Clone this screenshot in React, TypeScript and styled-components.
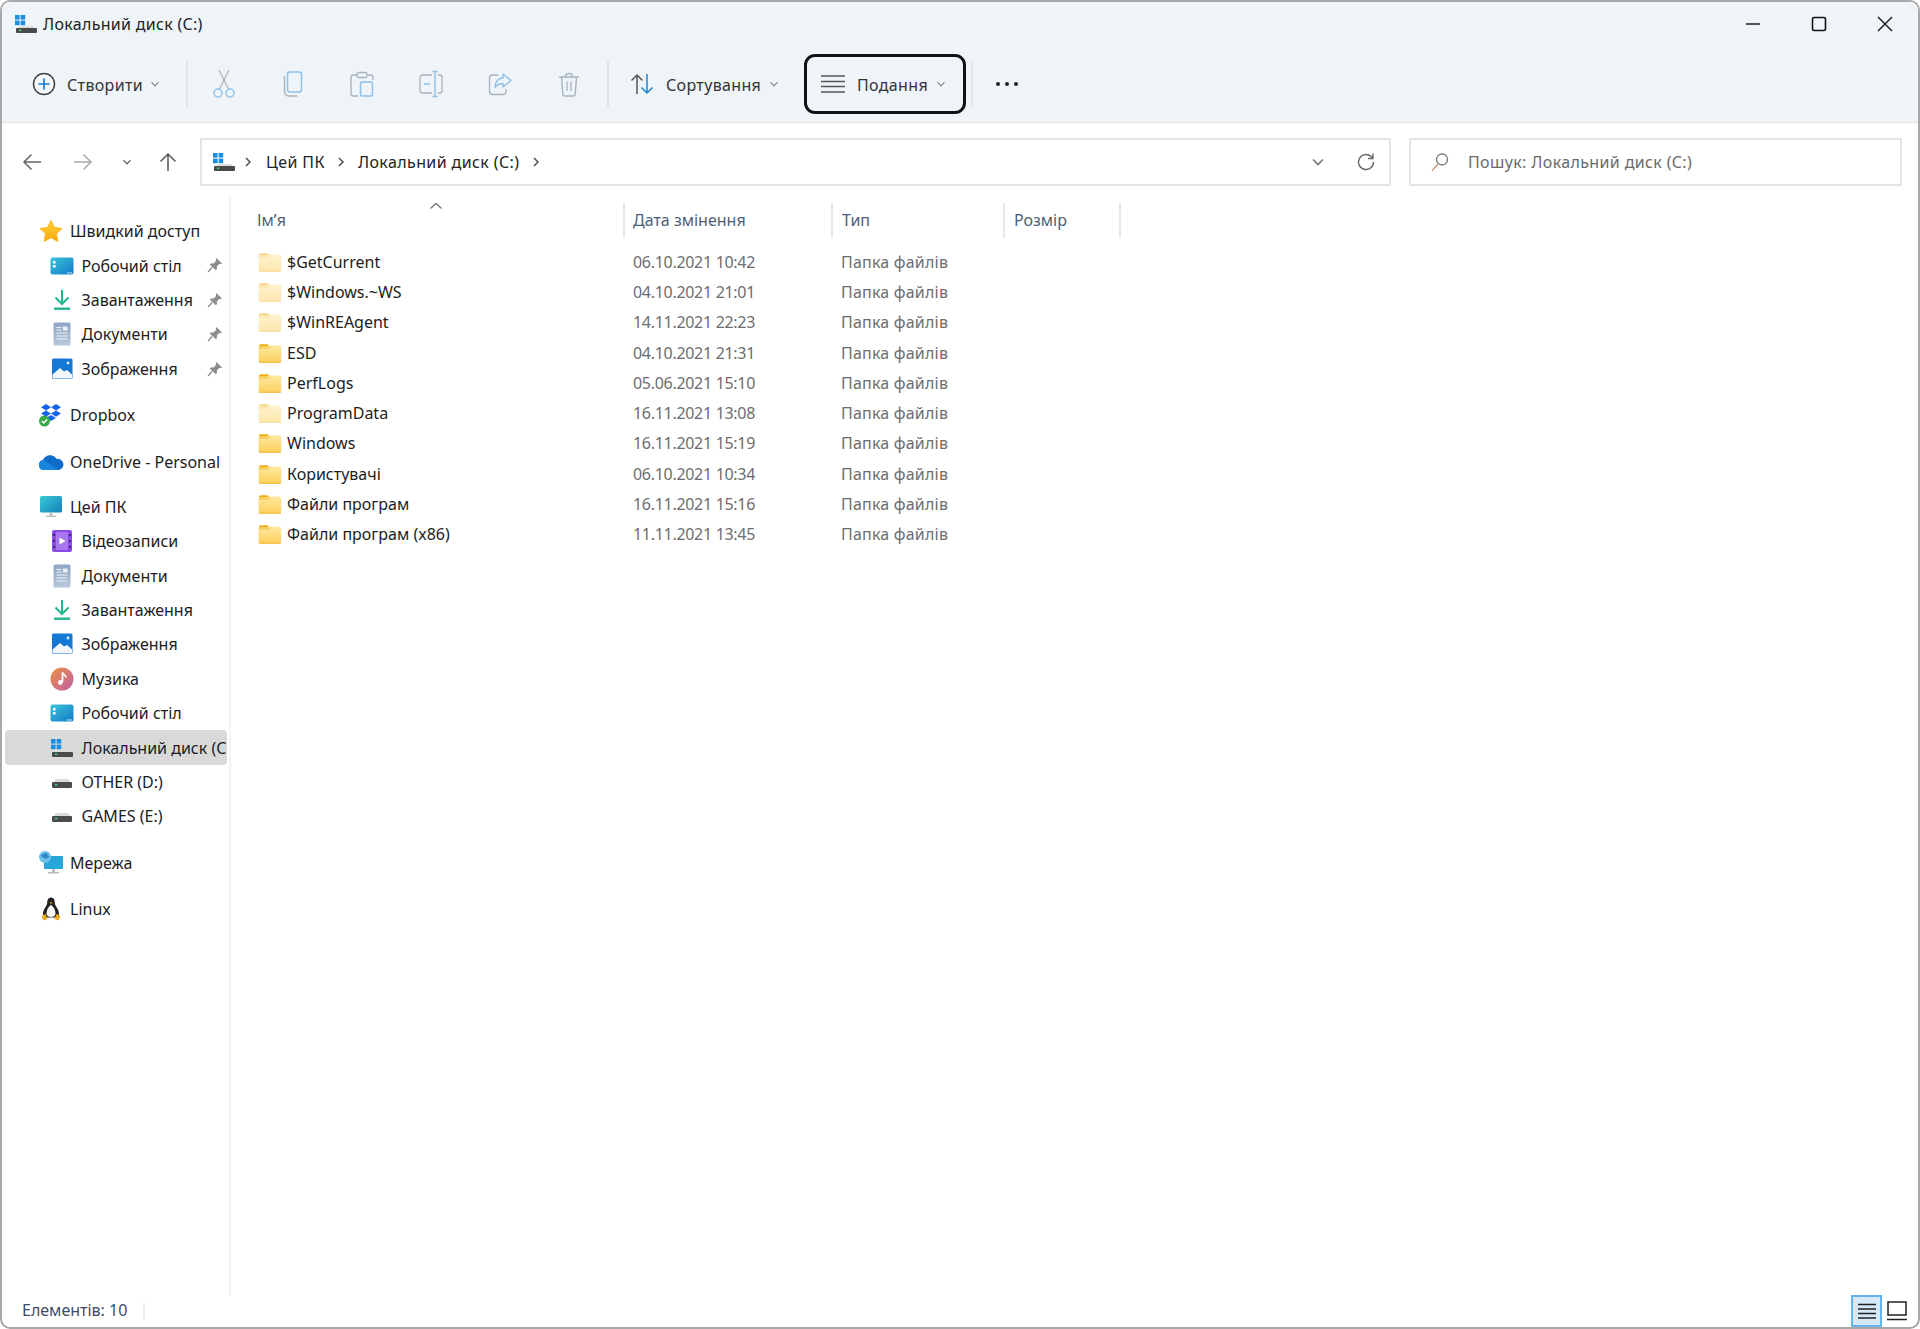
import React from "react";
import styled, { createGlobalStyle } from "styled-components";

const Global = createGlobalStyle`
  html, body { margin: 0; padding: 0; height: 100%; background: #fff; }
  #root { height: 100%; }
  * { box-sizing: border-box; }
  body { font-family: "Noto Sans", "Open Sans", sans-serif; font-size: 16px; color: #1c1c1c; }
  svg { display: block; flex: none; }
`;

const Win = styled.div`
  height: 1329px;
  border: 2px solid #a8a8a8;
  border-radius: 10px;
  display: flex;
  flex-direction: column;
  overflow: hidden;
  background: #fff;
`;
const Head = styled.header`
  background: #eff4f9;
  border-bottom: 1px solid #e2e4e6;
  height: 121px;
  flex: none;
  display: flex;
  flex-direction: column;
`;
const TitleBar = styled.div`
  height: 42px;
  flex: none;
  display: flex;
  align-items: center;
  padding: 1px 0 0 12px;
`;
const TitleText = styled.span`
  flex: 1;
  margin-left: 5px;
  letter-spacing: 0.3px;
  color: #222;
`;
const WinControl = styled.div`
  width: 66px;
  height: 42px;
  display: flex;
  align-items: center;
  justify-content: center;
`;
const Toolbar = styled.div`
  height: 78px;
  flex: none;
  display: flex;
  align-items: center;
  padding: 2px 0 0 26px;
`;
const ToolButton = styled.div<{ $w: number; $focus?: boolean; $pad: number; $gap: number }>`
  width: ${(p) => p.$w}px;
  flex: none;
  height: 60px;
  display: flex;
  align-items: center;
  gap: ${(p) => p.$gap}px;
  padding-left: ${(p) => p.$pad}px;
  border-radius: 11px;
  color: #333;
  border: 3px solid ${(p) => (p.$focus ? "#111" : "transparent")};
`;
const Label = styled.span<{ $w: number }>`
  width: ${(p) => p.$w}px;
  padding-top: 2px;
  letter-spacing: 0.35px;
  white-space: nowrap;
`;
const IconButton = styled.div`
  width: 69px;
  flex: none;
  height: 48px;
  display: flex;
  align-items: center;
  justify-content: center;
`;
const ToolSep = styled.div<{ $ml: number; $mr?: number }>`
  width: 2px;
  flex: none;
  height: 46px;
  margin-left: ${(p) => p.$ml}px;
  margin-right: ${(p) => p.$mr ?? 0}px;
  background: #e1e5e9;
`;
const MoreDots = styled.div`
  margin-left: 22px;
`;
const AddressRow = styled.div`
  height: 73px;
  flex: none;
  display: grid;
  grid-template-columns: 198px 1191px 1fr;
  padding-top: 15px;
`;
const NavGroup = styled.div`
  height: 48px;
  display: flex;
  align-items: center;
`;
const NavBtn = styled.div<{ $w: number }>`
  width: ${(p) => p.$w}px;
  display: flex;
  justify-content: center;
`;
const AddrBox = styled.div`
  height: 48px;
  border: 2px solid #e4e4e4;
  display: flex;
  align-items: center;
  padding-left: 10px;
  letter-spacing: 0.4px;
  color: #222;
`;
const CrumbSep = styled.div<{ $l: number; $r: number }>`
  margin: 0 ${(p) => p.$r}px 0 ${(p) => p.$l}px;
`;
const AddrRight = styled.div`
  margin-left: auto;
  display: flex;
  align-items: center;
  gap: 31px;
  padding-right: 13px;
`;
const SearchBox = styled.div`
  height: 48px;
  width: 493px;
  margin-left: 18px;
  border: 2px solid #e4e4e4;
  display: flex;
  align-items: center;
  padding-left: 20px;
  gap: 19px;
  letter-spacing: 0.37px;
  color: #6a6a6a;
`;
const Content = styled.div`
  flex: 1;
  min-height: 0;
  display: flex;
`;
const Sidebar = styled.nav`
  width: 229px;
  flex: none;
  padding: 18px 2px 0 3px;
  border-right: 2px solid #f3f3f3;
`;
const NavRow = styled.div<{ $sub?: boolean; $sel?: boolean; $top?: number }>`
  height: 34.4px;
  margin-top: ${(p) => p.$top ?? 0}px;
  display: flex;
  align-items: center;
  gap: ${(p) => (p.$sub ? 7.5 : 7)}px;
  padding-left: ${(p) => (p.$sub ? 45 : 34)}px;
  background: ${(p) => (p.$sel ? "#d9d9d9" : "transparent")};
  border-radius: 4px;
  overflow: hidden;
  position: relative;
  white-space: nowrap;
  color: #1c1c24;
`;
const IconSlot = styled.span`
  width: 24px;
  flex: none;
  display: flex;
  justify-content: center;
`;
const PinBox = styled.span`
  position: absolute;
  left: 202px;
  top: 9px;
`;
const Main = styled.main`
  flex: 1;
  min-width: 0;
  padding: 7px 0 0 20px;
  position: relative;
`;
const HeaderRow = styled.div`
  display: grid;
  grid-template-columns: 374px 208px 172px 116px;
  height: 35px;
`;
const HeadCell = styled.div<{ $pad: number }>`
  padding: 0 0 1px ${(p) => p.$pad}px;
  display: flex;
  align-items: center;
  color: #4d5f78;
  border-right: 2px solid #e8e8e8;
`;
const SortCaret = styled.div`
  position: absolute;
  left: 198px;
  top: 6px;
`;
const FileList = styled.div`
  margin-top: 8.5px;
`;
const FileRow = styled.div`
  display: grid;
  grid-template-columns: 374px 208px 172px;
  height: 30.3px;
  align-items: center;
`;
const NameCell = styled.div`
  display: flex;
  align-items: center;
  gap: 5px;
  padding-left: 7px;
  color: #1d1d1d;
`;
const MetaCell = styled.div<{ $pad: number; $ls?: number }>`
  padding-left: ${(p) => p.$pad}px;
  letter-spacing: ${(p) => p.$ls ?? 0}px;
  color: #6d6d6d;
`;
const StatusBar = styled.footer`
  height: 32px;
  flex: none;
  display: flex;
  align-items: center;
  padding: 0 0 0 20px;
  color: #3f4b66;
`;
const StatusText = styled.span`
  width: 121px;
  padding-bottom: 2px;
`;
const StatusSep = styled.div`
  width: 2px;
  height: 18px;
  background: #f0f0f0;
`;
const ViewToggles = styled.div`
  margin-left: auto;
  display: flex;
  align-items: center;
  height: 100%;
  padding-right: 11px;
  gap: 5px;
`;
const ViewBtn = styled.div<{ $on?: boolean }>`
  width: 31px;
  height: 32px;
  display: flex;
  align-items: center;
  justify-content: center;
  background: ${(p) => (p.$on ? "#d5e9f8" : "transparent")};
  border: 2px solid ${(p) => (p.$on ? "#62b5e5" : "transparent")};
`;

const Chev = ({ c = "#888", s = 10 }: { c?: string; s?: number }) => (
  <svg width={s} height={s} viewBox="0 0 10 10"><path d="M1.5 3.2 5 6.8l3.5-3.6" fill="none" stroke={c} strokeWidth="1.2" /></svg>
);
const Crumb = () => (
  <svg width="8" height="12" viewBox="0 0 8 12"><path d="M2 2l4 4-4 4" fill="none" stroke="#444" strokeWidth="1.4" /></svg>
);
const DriveCIcon = () => (
  <svg width="24" height="20" viewBox="0 0 24 20">
    <rect x="1" y="1" width="4.600" height="4.600" fill="#1a8fdf" /><rect x="6.600" y="1" width="4.600" height="4.600" fill="#1a8fdf" />
    <rect x="1" y="6.600" width="4.600" height="4.600" fill="#1a8fdf" /><rect x="6.600" y="6.600" width="4.600" height="4.600" fill="#1a8fdf" />
    <path d="M3 16l3-4h13l3 4z" fill="#dcdcdc" />
    <rect x="2" y="14" width="21" height="5" rx="1" fill="#4a4a4a" />
    <rect x="5" y="15.500" width="2.400" height="1.600" fill="#3ed06a" />
  </svg>
);
const DriveIcon = () => (
  <svg width="24" height="20" viewBox="0 0 24 20">
    <path d="M3 11l3-4h12l3 4z" fill="#dcdcdc" />
    <rect x="2" y="10" width="20" height="6" rx="1" fill="#4c4c4c" />
    <rect x="5" y="11.800" width="2.400" height="1.600" fill="#3ed06a" />
  </svg>
);
const Star = () => (
  <svg width="24" height="22" viewBox="0 0 24 22"><defs><linearGradient id="st" x1="0" y1="0" x2="0" y2="1"><stop offset="0" stopColor="#ffd43c" /><stop offset="1" stopColor="#f9a80e" /></linearGradient></defs>
    <path d="M12 .5l3.400 7 7.600 1-5.600 5.300 1.500 7.600L12 17.700 5.100 21.400l1.500-7.600L1 8.500l7.600-1z" fill="url(#st)" stroke="#f7b21a" strokeLinejoin="round" /></svg>
);
const Desktop = () => (
  <svg width="24" height="20" viewBox="0 0 24 20"><defs><linearGradient id="dk" x1="0" y1="0" x2="1" y2="1"><stop offset="0" stopColor="#37c6d8" /><stop offset="1" stopColor="#1578c8" /></linearGradient></defs>
    <rect x="0.500" y="1.500" width="23" height="17" rx="2" fill="url(#dk)" /><rect x="3" y="5" width="2.500" height="2.500" fill="#fff" /><rect x="3" y="9" width="2.500" height="2.500" fill="#fff" /><rect x="17" y="16.500" width="5" height="1" fill="#cfeaf5" /></svg>
);
const Download = () => (
  <svg width="24" height="22" viewBox="0 0 24 22"><path d="M12 1v13.500M5.500 8.500l6.500 6.500 6.500-6.500" fill="none" stroke="#22b590" strokeWidth="2" /><rect x="4" y="18.500" width="16" height="2.400" fill="#22b590" /></svg>
);
const Docs = () => (
  <svg width="24" height="24" viewBox="0 0 24 24"><defs><linearGradient id="dc" x1="0" y1="0" x2="0" y2="1"><stop offset="0" stopColor="#8ea5c6" /><stop offset="1" stopColor="#b8c7db" /></linearGradient></defs>
    <rect x="3.500" y="0.500" width="17" height="23" rx="1.500" fill="url(#dc)" /><path d="M6.500 5.500h5M6.500 8h5M6.500 11h11M6.500 14h11M6.500 17h11" stroke="#eef2f7" strokeWidth="1.200" /><rect x="13" y="4.500" width="4.500" height="4" fill="#eef2f7" /></svg>
);
const Pictures = () => (
  <svg width="24" height="24" viewBox="0 0 24 24"><rect x="2" y="1.500" width="20.500" height="20.500" rx="1.500" fill="#1478d4" /><circle cx="18" cy="6" r="1.400" fill="#dfefff" /><path d="M2.500 21.500v-4L10 11l4 3.500 3-1.500 5 4.500v4z" fill="#f2f6fb" /></svg>
);
const Dropbox = () => (
  <svg width="26" height="24" viewBox="0 0 26 24"><path d="M8 1l5 3.200L8 7.400 3 4.200zM18 1l5 3.200-5 3.200-5-3.200zM8 7.400l5 3.200-5 3.200-5-3.200zM18 7.400l5 3.200-5 3.200-5-3.200zM13 12l5 3-5 3-5-3z" fill="#1464f0" /><circle cx="6.500" cy="18" r="5.500" fill="#38a84a" /><path d="M3.800 18l2 2 3.400-3.600" fill="none" stroke="#fff" strokeWidth="1.500" /></svg>
);
const OneDrive = () => (
  <svg width="26" height="18" viewBox="0 0 26 18"><path d="M6 17a5 5 0 0 1-1-9.900A7.500 7.500 0 0 1 18.500 6 5.600 5.600 0 0 1 21 17z" fill="#0f6cc9" /><path d="M5.500 17a5 5 0 0 1-.3-9.900l9 5.400L21 17z" fill="#1a85de" /></svg>
);
const Pc = () => (
  <svg width="24" height="24" viewBox="0 0 24 24"><defs><linearGradient id="pc" x1="0" y1="0" x2="1" y2="1"><stop offset="0" stopColor="#38cbd2" /><stop offset="1" stopColor="#1580bd" /></linearGradient></defs>
    <rect x="1" y="1" width="22" height="16.500" rx="1.500" fill="url(#pc)" /><rect x="10.500" y="17.500" width="3" height="3" fill="#b8bcc0" /><rect x="7" y="20.500" width="10" height="1.500" rx=".7" fill="#b8bcc0" /></svg>
);
const Videos = () => (
  <svg width="22" height="24" viewBox="0 0 22 24"><rect x="1" y="1" width="20" height="22" rx="2" fill="#8a49e6" /><rect x="5" y="3" width="12" height="18" fill="#a877f0" /><path d="M8.500 8.500v7l6-3.500z" fill="#fff" /><path d="M2 5h2v2H2zM2 11h2v2H2zM2 17h2v2H2zM18 5h2v2h-2zM18 11h2v2h-2zM18 17h2v2h-2z" fill="#3d2a78" /></svg>
);
const Music = () => (
  <svg width="24" height="24" viewBox="0 0 24 24"><defs><linearGradient id="mu" x1="0" y1="0" x2="1" y2="1"><stop offset="0" stopColor="#ef9040" /><stop offset="1" stopColor="#bf60a8" /></linearGradient></defs>
    <circle cx="12" cy="12" r="11.500" fill="url(#mu)" /><path d="M12.500 5.500v9.500" stroke="#fff" strokeWidth="1.800" /><path d="M12.500 5.500c.5 2 3.500 2.500 3.500 5" fill="none" stroke="#fff" strokeWidth="1.500" /><circle cx="10.300" cy="15.500" r="2.400" fill="#fff" /></svg>
);
const Network = () => (
  <svg width="26" height="24" viewBox="0 0 26 24"><rect x="6" y="5" width="19" height="13" rx="1" fill="#27a6d9" /><rect x="14" y="18" width="3" height="3" fill="#b8bcc0" /><rect x="10" y="21" width="11" height="1.500" fill="#b8bcc0" /><circle cx="7" cy="6" r="6" fill="#6cc0e8" /><path d="M3 4c2 0 3-2 5-2s1 3 3 3-3 4-5 2-3-1-3-3z" fill="#2f86c6" /></svg>
);
const Penguin = () => (
  <svg width="22" height="24" viewBox="0 0 22 24"><path d="M11 .5c3 0 3.800 3 3.800 5.500 0 3 4.200 6 4.200 11 0 2-1.500 3.500-3 3.500H6c-1.500 0-3-1.500-3-3.500 0-5 4.200-8 4.200-11C7.200 3.500 8 .5 11 .5z" fill="#222" /><path d="M11 8c2 1 4.500 5 4.500 8.500 0 2.500-2 3.500-4.500 3.500s-4.500-1-4.500-3.500C6.500 13 9 9 11 8z" fill="#f7f7f7" /><path d="M9.500 5.200h3L11 7z" fill="#e8a820" /><path d="M1.500 19l4-2 2 5-4 1.500zM20.500 19l-4-2-2 5 4 1.500z" fill="#e8a820" /></svg>
);
const Pin = () => (
  <svg width="16" height="16" viewBox="0 0 16 16"><path d="M9.500 1l5.500 5.500-1.500.8-1-.5-2.700 2.700.2 2.500-1.200 1.200L2.700 7.600l1.200-1.200 2.500.2 2.700-2.700-.4-1z" fill="#8d8d8d" /><path d="M5 10.500L1 15" stroke="#8d8d8d" strokeWidth="1.300" /></svg>
);
const Folder = ({ faded }: { faded?: boolean }) => (
  <svg width="24" height="20" viewBox="0 0 24 20" opacity={faded ? 0.5 : 1}>
    <defs><linearGradient id="fo" x1="0" y1="0" x2="0" y2="1"><stop offset="0" stopColor="#ffe9a0" /><stop offset="1" stopColor="#fbcf5c" /></linearGradient></defs>
    <path d="M1 3c0-1 .7-1.800 1.800-1.800h6c.8 0 1.300.3 1.800.9L12.200 4H1z" fill="#f0ae16" />
    <path d="M0.600 5c0-.8.6-1.500 1.500-1.500h7l1.600-1h10.700c1 0 1.800.8 1.800 1.800V18c0 1-.8 1.700-1.800 1.700H2.400c-1 0-1.800-.7-1.800-1.700z" fill="url(#fo)" />
    <path d="M0.600 5h10.100l1.800-1.500" fill="none" stroke="#f3bc3c" strokeWidth="1" />
    <path d="M1 19.200h22" stroke="#f0b93a" strokeWidth="1" />
  </svg>
);

type NavItem = { icon: React.ReactNode; label: string; sub?: boolean; pin?: boolean; sel?: boolean; top?: number };
const navItems: NavItem[] = [
  { icon: <Star />, label: "Швидкий доступ" },
  { icon: <Desktop />, label: "Робочий стіл", sub: true, pin: true },
  { icon: <Download />, label: "Завантаження", sub: true, pin: true },
  { icon: <Docs />, label: "Документи", sub: true, pin: true },
  { icon: <Pictures />, label: "Зображення", sub: true, pin: true },
  { icon: <Dropbox />, label: "Dropbox", top: 12 },
  { icon: <OneDrive />, label: "OneDrive - Personal", top: 12 },
  { icon: <Pc />, label: "Цей ПК", top: 11 },
  { icon: <Videos />, label: "Відеозаписи", sub: true },
  { icon: <Docs />, label: "Документи", sub: true },
  { icon: <Download />, label: "Завантаження", sub: true },
  { icon: <Pictures />, label: "Зображення", sub: true },
  { icon: <Music />, label: "Музика", sub: true },
  { icon: <Desktop />, label: "Робочий стіл", sub: true },
  { icon: <DriveCIcon />, label: "Локальний диск (C:)", sub: true, sel: true },
  { icon: <DriveIcon />, label: "OTHER (D:)", sub: true },
  { icon: <DriveIcon />, label: "GAMES (E:)", sub: true },
  { icon: <Network />, label: "Мережа", top: 12 },
  { icon: <Penguin />, label: "Linux", top: 12 },
];

const files: [string, string, boolean?][] = [
  ["$GetCurrent", "06.10.2021 10:42", true],
  ["$Windows.~WS", "04.10.2021 21:01", true],
  ["$WinREAgent", "14.11.2021 22:23", true],
  ["ESD", "04.10.2021 21:31"],
  ["PerfLogs", "05.06.2021 15:10"],
  ["ProgramData", "16.11.2021 13:08", true],
  ["Windows", "16.11.2021 15:19"],
  ["Користувачі", "06.10.2021 10:34"],
  ["Файли програм", "16.11.2021 15:16"],
  ["Файли програм (x86)", "11.11.2021 13:45"],
];

const disabled = "#a9b3bc";
const accent = "#8fc1e8";

export default function App() {
  return (
    <>
      <Global />
      <Win>
        <Head>
          <TitleBar>
            <DriveCIcon />
            <TitleText>Локальний диск (C:)</TitleText>
            <WinControl><svg width="16" height="16" viewBox="0 0 16 16"><path d="M1 8h14" stroke="#222" strokeWidth="1.600" /></svg></WinControl>
            <WinControl><svg width="16" height="16" viewBox="0 0 16 16"><rect x="1.500" y="1.500" width="13" height="13" rx="1.500" fill="none" stroke="#111" strokeWidth="1.600" /></svg></WinControl>
            <WinControl><svg width="16" height="16" viewBox="0 0 16 16"><path d="M1 1l14 14M15 1L1 15" stroke="#222" strokeWidth="1.500" /></svg></WinControl>
          </TitleBar>
          <Toolbar>
            <ToolButton $w={158} $pad={1} $gap={11}>
              <svg width="24" height="24" viewBox="0 0 24 24"><circle cx="12" cy="12" r="10.500" fill="#fff" fillOpacity=".4" stroke="#444" strokeWidth="1.500" /><path d="M12 6.500v11M6.500 12h11" stroke="#1478c8" strokeWidth="1.700" /></svg>
              <Label $w={72}>Створити</Label>
              <Chev />
            </ToolButton>
            <ToolSep $ml={0} $mr={1.5} />
            <IconButton>
              <svg width="24" height="30" viewBox="0 0 24 30"><path d="M7 1l9.500 19M17 1L7.500 20" stroke={disabled} strokeWidth="1.300" fill="none" /><circle cx="6" cy="24" r="4" fill="none" stroke={accent} strokeWidth="1.500" /><circle cx="18" cy="24" r="4" fill="none" stroke={accent} strokeWidth="1.500" /></svg>
            </IconButton>
            <IconButton>
              <svg width="22" height="26" viewBox="0 0 22 26"><rect x="5.500" y="1" width="14" height="20" rx="2.500" fill="none" stroke={accent} strokeWidth="1.500" /><path d="M2.500 5v16c0 2.200 1.800 4 4 4h9" fill="none" stroke={disabled} strokeWidth="1.400" /></svg>
            </IconButton>
            <IconButton>
              <svg width="24" height="26" viewBox="0 0 24 26"><path d="M7 4H3.500C2 4 1 5 1 6.500v16C1 24 2 25 3.500 25H8" fill="none" stroke={disabled} strokeWidth="1.400" /><path d="M18 4h2.500C22 4 23 5 23 6.500V9" fill="none" stroke={disabled} strokeWidth="1.400" /><rect x="7" y="1.500" width="10" height="5" rx="1.500" fill="none" stroke={disabled} strokeWidth="1.300" /><rect x="10.500" y="11" width="12" height="14" rx="1.500" fill="none" stroke={accent} strokeWidth="1.500" /></svg>
            </IconButton>
            <IconButton>
              <svg width="24" height="28" viewBox="0 0 24 28"><path d="M13 5H3.500C2 5 1 6 1 7.500v13C1 22 2 23 3.500 23H13M19 5h1.500C22 5 23 6 23 7.500v13c0 1.500-1 2.500-2.500 2.500H19" fill="none" stroke={disabled} strokeWidth="1.300" /><path d="M13.500 1.500h5M13.500 26.500h5M16 1.500v25" stroke={accent} strokeWidth="1.400" /><path d="M5 14h6" stroke={accent} strokeWidth="1.500" /></svg>
            </IconButton>
            <IconButton>
              <svg width="24" height="24" viewBox="0 0 24 24"><path d="M10 3H4.500C2.500 3 1.500 4 1.500 6v13.500c0 2 1 3 3 3H15c2 0 3-1 3-3V17" fill="none" stroke={disabled} strokeWidth="1.400" /><path d="M15 2l8 6.500-8 6.500v-3.500c-4 0-6 1-8 4 0-5.500 3-9.500 8-9.500z" fill="none" stroke={accent} strokeWidth="1.400" strokeLinejoin="round" /></svg>
            </IconButton>
            <IconButton>
              <svg width="22" height="26" viewBox="0 0 22 26"><path d="M1 6h20M7.500 5.500c0-4 7-4 7 0M3.500 6l1.300 17c.1 1.200 1 2 2.200 2h8c1.200 0 2.100-.8 2.200-2l1.300-17" fill="none" stroke={disabled} strokeWidth="1.400" /><path d="M9 10.500V20M13 10.500V20" stroke={disabled} strokeWidth="1.300" /></svg>
            </IconButton>
            <ToolSep $ml={3.5} />
            <ToolButton $w={195} $pad={18} $gap={12}>
              <svg width="24" height="24" viewBox="0 0 24 24"><path d="M7 22V3M1.500 8.500L7 3l5.500 5.500" fill="none" stroke="#555" strokeWidth="1.500" /><path d="M17 2v19M11.500 15.500L17 21l5.500-5.500" fill="none" stroke="#1a84d6" strokeWidth="1.500" /></svg>
              <Label $w={91}>Сортування</Label>
              <Chev />
            </ToolButton>
            <ToolButton $w={162} $pad={14} $gap={12} $focus>
              <svg width="24" height="20" viewBox="0 0 24 20"><path d="M0 2h24M0 7.500h24M0 12.500h24M0 18h24" stroke="#555" strokeWidth="1.400" /></svg>
              <Label $w={67}>Подання</Label>
              <Chev />
            </ToolButton>
            <ToolSep $ml={5} />
            <MoreDots>
              <svg width="24" height="6" viewBox="0 0 24 6"><circle cx="3" cy="3" r="2" fill="#222" /><circle cx="12" cy="3" r="2" fill="#222" /><circle cx="21" cy="3" r="2" fill="#222" /></svg>
            </MoreDots>
          </Toolbar>
        </Head>
        <AddressRow>
          <NavGroup>
            <NavBtn $w={60}><svg width="20" height="18" viewBox="0 0 20 18"><path d="M19 9H2M9.500 1.500L2 9l7.500 7.500" fill="none" stroke="#666" strokeWidth="1.500" /></svg></NavBtn>
            <NavBtn $w={42}><svg width="20" height="18" viewBox="0 0 20 18"><path d="M1 9h17M10.500 1.500L18 9l-7.500 7.500" fill="none" stroke="#aaa" strokeWidth="1.500" /></svg></NavBtn>
            <NavBtn $w={46}><Chev c="#555" /></NavBtn>
            <NavBtn $w={36}><svg width="18" height="20" viewBox="0 0 18 20"><path d="M9 19V2M1.500 9.500L9 2l7.500 7.500" fill="none" stroke="#555" strokeWidth="1.500" /></svg></NavBtn>
          </NavGroup>
          <AddrBox>
            <DriveCIcon />
            <CrumbSep $l={8} $r={14}><Crumb /></CrumbSep>
            <span>Цей ПК</span>
            <CrumbSep $l={12} $r={13}><Crumb /></CrumbSep>
            <span>Локальний диск (C:)</span>
            <CrumbSep $l={13} $r={0}><Crumb /></CrumbSep>
            <AddrRight>
              <Chev c="#777" s={14} />
              <svg width="20" height="20" viewBox="0 0 20 20"><path d="M17.500 10a7.500 7.500 0 1 1-2.300-5.400L17 6.500M17 1.500v5h-5" fill="none" stroke="#666" strokeWidth="1.400" /></svg>
            </AddrRight>
          </AddrBox>
          <SearchBox>
            <svg width="18" height="20" viewBox="0 0 18 20"><circle cx="11" cy="7.500" r="5.500" fill="none" stroke="#777" strokeWidth="1.300" /><path d="M7 12L1 18.500" stroke="#c39a86" strokeWidth="1.400" /></svg>
            <span>Пошук: Локальний диск (C:)</span>
          </SearchBox>
        </AddressRow>
        <Content>
          <Sidebar>
            {navItems.map((n, i) => (
              <NavRow key={i} $sub={n.sub} $sel={n.sel} $top={n.top}>
                <IconSlot>{n.icon}</IconSlot>
                <span>{n.label}</span>
                {n.pin && <PinBox><Pin /></PinBox>}
              </NavRow>
            ))}
          </Sidebar>
          <Main>
            <HeaderRow>
              <HeadCell $pad={6}>Ім’я</HeadCell>
              <HeadCell $pad={8}>Дата змінення</HeadCell>
              <HeadCell $pad={9}>Тип</HeadCell>
              <HeadCell $pad={9}>Розмір</HeadCell>
            </HeaderRow>
            <SortCaret><svg width="14" height="8" viewBox="0 0 14 8"><path d="M1.500 6.500L7 1.500l5.500 5" fill="none" stroke="#777" strokeWidth="1.300" /></svg></SortCaret>
            <FileList>
              {files.map(([name, date, faded]) => (
                <FileRow key={name}>
                  <NameCell><Folder faded={faded} /><span>{name}</span></NameCell>
                  <MetaCell $pad={8} $ls={-0.3}>{date}</MetaCell>
                  <MetaCell $pad={8} $ls={0.2}>Папка файлів</MetaCell>
                </FileRow>
              ))}
            </FileList>
          </Main>
        </Content>
        <StatusBar>
          <StatusText>Елементів: 10</StatusText>
          <StatusSep />
          <ViewToggles>
            <ViewBtn $on><svg width="18" height="16" viewBox="0 0 18 16"><path d="M0 1.500h18M0 6h18M0 10.500h18M0 15h18" stroke="#222" strokeWidth="1.500" /></svg></ViewBtn>
            <svg width="20" height="20" viewBox="0 0 20 20"><rect x="1" y="1" width="18" height="13" fill="#fff" stroke="#222" strokeWidth="1.500" /><path d="M0 18.500h20" stroke="#222" strokeWidth="1.500" /></svg>
          </ViewToggles>
        </StatusBar>
      </Win>
    </>
  );
}
